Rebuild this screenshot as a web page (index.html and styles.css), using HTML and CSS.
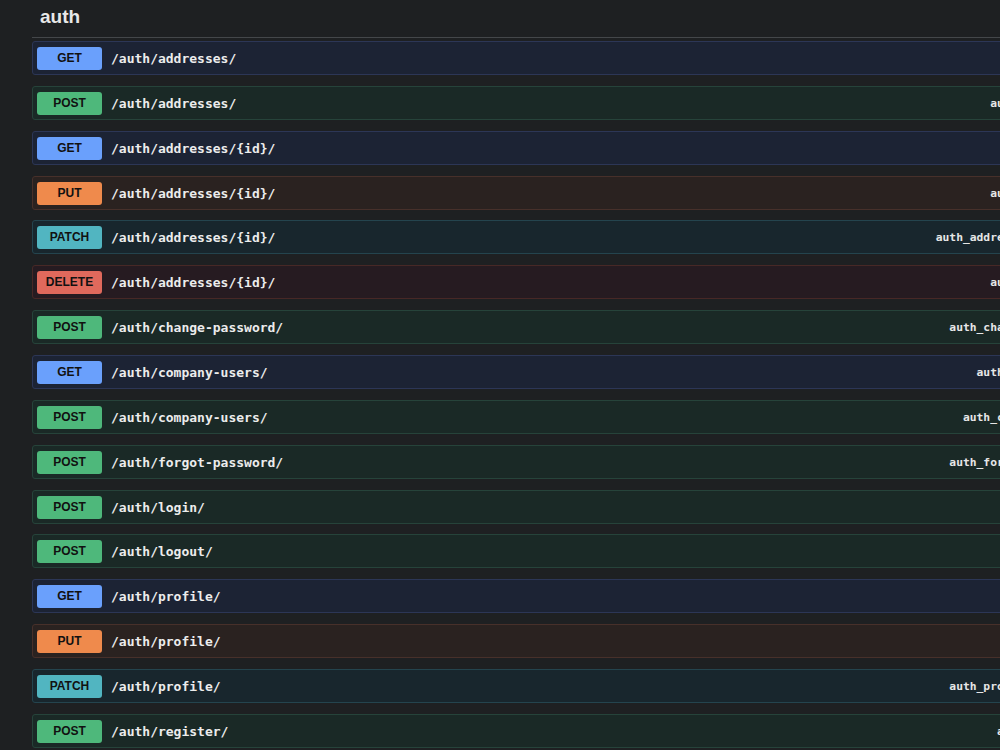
FILE: index.html
```html
<!DOCTYPE html>
<html>

	<head>
		<meta charset="utf-8" />
		<title>auth</title>
		<link rel="stylesheet" href="styles.css">
	</head>

	<body>
		<section class="tag-section">
			<h3 class="tag-title">auth</h3>
			<div class="ops">
				<div class="op op-get"><span class="method">GET</span><span class="path">/auth/addresses/</span><span class="op-id">auth_addresses_list</span></div>
				<div class="op op-post"><span class="method">POST</span><span class="path">/auth/addresses/</span><span class="op-id">auth_addresses_create</span></div>
				<div class="op op-get"><span class="method">GET</span><span class="path">/auth/addresses/{id}/</span><span class="op-id">auth_addresses_read</span></div>
				<div class="op op-put"><span class="method">PUT</span><span class="path">/auth/addresses/{id}/</span><span class="op-id">auth_addresses_update</span></div>
				<div class="op op-patch"><span class="method">PATCH</span><span class="path">/auth/addresses/{id}/</span><span class="op-id">auth_addresses_partial_update</span></div>
				<div class="op op-delete"><span class="method">DELETE</span><span class="path">/auth/addresses/{id}/</span><span class="op-id">auth_addresses_delete</span></div>
				<div class="op op-post"><span class="method">POST</span><span class="path">/auth/change-password/</span><span class="op-id">auth_change_password_create</span></div>
				<div class="op op-get"><span class="method">GET</span><span class="path">/auth/company-users/</span><span class="op-id">auth_company_users_list</span></div>
				<div class="op op-post"><span class="method">POST</span><span class="path">/auth/company-users/</span><span class="op-id">auth_company_users_create</span></div>
				<div class="op op-post"><span class="method">POST</span><span class="path">/auth/forgot-password/</span><span class="op-id">auth_forgot_password_create</span></div>
				<div class="op op-post"><span class="method">POST</span><span class="path">/auth/login/</span><span class="op-id">auth_login_create</span></div>
				<div class="op op-post"><span class="method">POST</span><span class="path">/auth/logout/</span><span class="op-id">auth_logout_create</span></div>
				<div class="op op-get"><span class="method">GET</span><span class="path">/auth/profile/</span><span class="op-id">auth_profile_read</span></div>
				<div class="op op-put"><span class="method">PUT</span><span class="path">/auth/profile/</span><span class="op-id">auth_profile_update</span></div>
				<div class="op op-patch"><span class="method">PATCH</span><span class="path">/auth/profile/</span><span class="op-id">auth_profile_partial_update</span></div>
				<div class="op op-post"><span class="method">POST</span><span class="path">/auth/register/</span><span class="op-id">auth_register_create</span></div>
			</div>
		</section>
	</body>

</html>
```

FILE: styles.css
```css
html,
body {
	margin: 0;
	padding: 0;
	background: #1e2022;
	overflow: hidden;
	height: 750px;
}

.tag-section {
	width: 1168px;
	padding-left: 32px;
}

.tag-title {
	margin: 0;
	height: 38px;
	box-sizing: border-box;
	padding: 6px 0 0 8px;
	border-bottom: 1px solid #44474a;
	font-family: "Liberation Sans", Arial, sans-serif;
	font-size: 19px;
	font-weight: bold;
	color: #e8e8e8;
}

.ops {
	padding-top: 3px;
}

.op {
	display: flex;
	align-items: center;
	height: 34px;
	box-sizing: border-box;
	padding: 1px 66px 0 4px;
	margin-bottom: 10.87px;
	border: 1px solid;
	border-radius: 3px;
}

.method {
	width: 65px;
	height: 23px;
	line-height: 23px;
	flex: none;
	border-radius: 3px;
	text-align: center;
	font-family: "Liberation Sans", Arial, sans-serif;
	font-size: 12px;
	font-weight: bold;
	color: #111;
}

.path {
	margin-left: 9px;
	flex: 1;
	font-family: "DejaVu Sans Mono", monospace;
	font-size: 13px;
	font-weight: bold;
	color: #ececec;
}

.op-id {
	font-family: "DejaVu Sans Mono", monospace;
	font-size: 11.3px;
	font-weight: bold;
	color: #e6e6e6;
}

.op-get {
	background: #1c2334;
	border-color: #2c3656;
}

.op-get .method {
	background: #6aa0fc;
}

.op-post {
	background: #1a2926;
	border-color: #26433a;
}

.op-post .method {
	background: #4eb87b;
}

.op-put {
	background: #2a2220;
	border-color: #47302a;
}

.op-put .method {
	background: #ef8a4c;
}

.op-patch {
	background: #18262d;
	border-color: #24444e;
}

.op-patch .method {
	background: #51b5c1;
}

.op-delete {
	background: #261b21;
	border-color: #472826;
}

.op-delete .method {
	background: #e0695c;
}
```
